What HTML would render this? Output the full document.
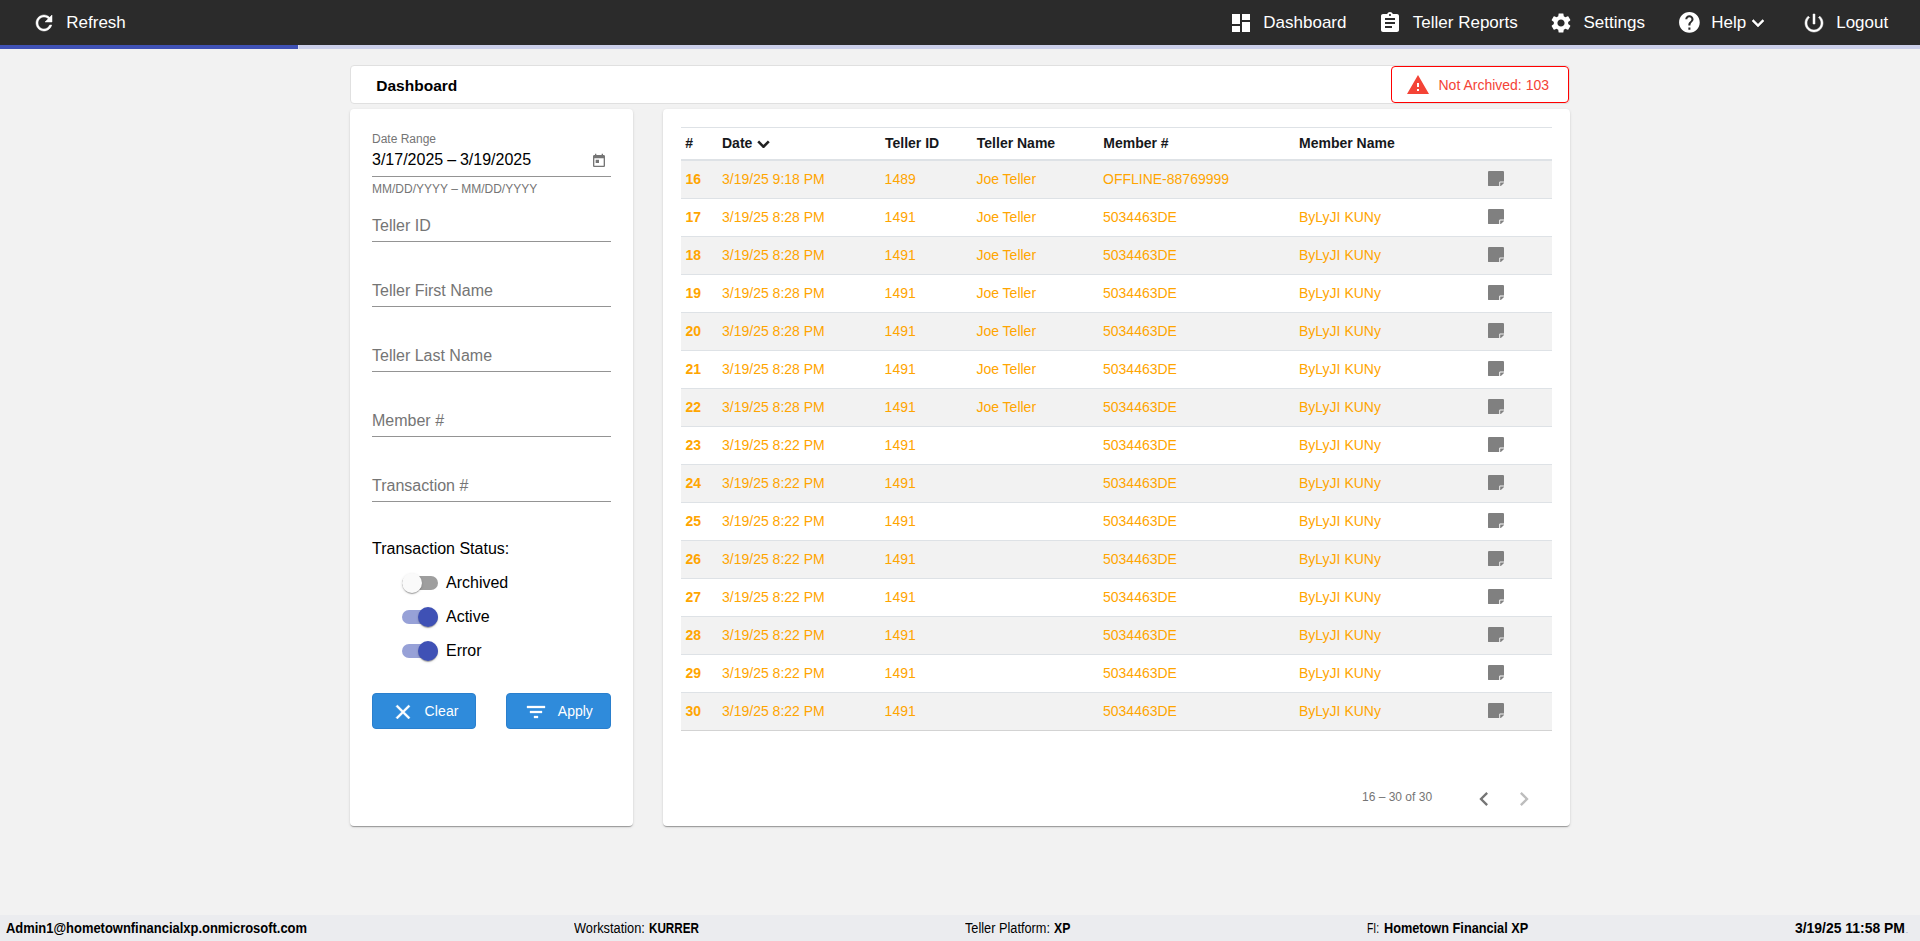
<!DOCTYPE html>
<html lang="en"><head><meta charset="utf-8"><title>Dashboard</title>
<style>
*{box-sizing:border-box;margin:0;padding:0}
html,body{width:1920px;height:941px;overflow:hidden}
body{position:relative;background:#f2f2f2;font-family:"Liberation Sans",sans-serif;color:#000;-webkit-font-smoothing:antialiased}
.ic{position:absolute;display:block}
.t{position:absolute;white-space:nowrap;line-height:1}
.nav{position:absolute;left:0;top:0;width:1920px;height:45px;background:#2b2b2b;color:#fff;font-size:17px}
.nav .t{color:#fff;font-size:17px;top:14px}
.prog{position:absolute;left:0;top:45px;width:1920px;height:4px;background:#cbcfea}
.prog i{position:absolute;left:0;top:0;height:4px;width:298px;background:#3f51b5;border-right:1px solid #dcdff2;box-sizing:content-box}
.hdr{position:absolute;left:350px;top:65px;width:1220px;height:39px;background:#fff;border:1px solid #e0e0e0;border-radius:4px}
.hdr h1{position:absolute;left:25.3px;top:11.9px;font-size:15.5px;line-height:1;font-weight:bold;color:#000;white-space:nowrap}
.na{position:absolute;left:1391px;top:66px;width:178px;height:37px;background:#fff;border:1px solid #f00;border-radius:4px}
.na .t{font-size:14px;color:#f44336;left:46.5px;top:11px}
.card{position:absolute;background:#fff;border-radius:4px;box-shadow:0 2px 1px -1px rgba(0,0,0,.2),0 1px 1px 0 rgba(0,0,0,.14),0 1px 3px 0 rgba(0,0,0,.12)}
.left{left:350px;top:109px;width:283px;height:717px}
.right{left:663px;top:109px;width:907px;height:717px}
.lbl{color:#757575}
.ul{position:absolute;left:22px;width:239px;height:1px;background:#949494}
.fld{font-size:16px;left:22px}
.tog{position:absolute;left:52px;width:36px;height:14px;border-radius:7px;background:#9e9e9e}
.tog i{position:absolute;top:-3px;left:0;width:20px;height:20px;border-radius:50%;background:#fafafa;box-shadow:0 2px 1px -1px rgba(0,0,0,.2),0 1px 1px 0 rgba(0,0,0,.14),0 1px 3px 0 rgba(0,0,0,.12)}
.tog.on{background:#97a1d7}
.tog.on i{left:16px;background:#3f51b5}
.tl{font-size:16px;left:96px;color:#000}
.btn{position:absolute;top:584px;height:36px;border-radius:4px;background:#2f8bdb;border:1px solid #2a7fcd;color:#fff;font-size:14px}
.btn .t{top:10.4px;color:#fff}
.th,.tr{position:absolute;left:18px;width:871px}
.th{top:18px;height:34px;border-top:1px solid #dee2e6;border-bottom:2px solid #dee2e6;font-weight:bold;font-size:14px;color:#16181b}
.tr{height:38px;border-bottom:1px solid #dee2e6;font-size:14px;color:#ffa500}
.tr.o{background:#f2f2f2}
.tr.last{border-bottom-color:#d3d3d3}
.th span,.tr span{position:absolute;white-space:nowrap;line-height:1}
.th span{top:8px}
.tr span{top:11px}
.tr b{position:absolute;white-space:nowrap;line-height:1;top:11px;left:4.5px}
.th .c1{left:4.2px}.th .c2{left:41px}.th .c3{left:204px}.th .c4{left:295.8px}.th .c5{left:422.3px}.th .c6{left:618px}
.tr .c2{left:41px}.tr .c3{left:203.6px}.tr .c4{left:295.4px}.tr .c5{left:422px}.tr .c6{left:618px}
.tr svg{position:absolute;left:807.2px;top:10px;width:16px;height:15.2px}
.pg{font-size:12px;color:#757575}
.foot{position:absolute;left:0;top:915px;width:1920px;height:26px;background:#ebecef;font-size:13px;color:#000}
.foot .f{top:6.15px;font-size:14px;transform-origin:0 0}
</style></head>
<body>
<div class="nav">
<svg class="ic" style="left:31.5px;top:11px;width:24px;height:24px" viewBox="0 0 24 24" fill="#fff" stroke="#fff" stroke-width="0.5" stroke-linejoin="round"><path d="M17.65 6.35C16.2 4.9 14.21 4 12 4c-4.42 0-7.99 3.58-7.99 8s3.57 8 7.99 8c3.73 0 6.84-2.55 7.73-6h-2.08c-.82 2.33-3.04 4-5.65 4-3.31 0-6-2.69-6-6s2.69-6 6-6c1.66 0 3.14.69 4.22 1.78L13 11h7V4l-2.35 2.35z"/></svg><span class="t" style="left:66.3px">Refresh</span>
<svg class="ic" style="left:1229.1px;top:10.7px;width:24px;height:24px" viewBox="0 0 24 24" fill="#fff"><path d="M3 13h8V3H3v10zm0 8h8v-6H3v6zm10 0h8V11h-8v10zm0-18v6h8V3h-8z"/></svg><span class="t" style="left:1263.3px">Dashboard</span>
<svg class="ic" style="left:1378.1px;top:10.7px;width:24px;height:24px" viewBox="0 0 24 24" fill="#fff"><path d="M19 3h-4.18C14.4 1.84 13.3 1 12 1c-1.3 0-2.4.84-2.82 2H5c-1.1 0-2 .9-2 2v14c0 1.1.9 2 2 2h14c1.1 0 2-.9 2-2V5c0-1.1-.9-2-2-2zm-7 0c.55 0 1 .45 1 1s-.45 1-1 1-1-.45-1-1 .45-1 1-1zm2 14H7v-2h7v2zm3-4H7v-2h10v2zm0-4H7V7h10v2z"/></svg><span class="t" style="left:1412.8px">Teller Reports</span>
<svg class="ic" style="left:1549.1px;top:10.7px;width:24px;height:24px" viewBox="0 0 24 24" fill="#fff"><path d="M19.14 12.94c.04-.3.06-.61.06-.94 0-.32-.02-.64-.07-.94l2.03-1.58c.18-.14.23-.41.12-.61l-1.92-3.32c-.12-.22-.37-.29-.59-.22l-2.39.96c-.5-.38-1.03-.7-1.62-.94l-.36-2.54c-.04-.24-.24-.41-.48-.41h-3.84c-.24 0-.43.17-.47.41l-.36 2.54c-.59.24-1.13.57-1.62.94l-2.39-.96c-.22-.08-.47 0-.59.22L2.74 8.87c-.12.21-.08.47.12.61l2.03 1.58c-.05.3-.09.63-.09.94s.02.64.07.94l-2.03 1.58c-.18.14-.23.41-.12.61l1.92 3.32c.12.22.37.29.59.22l2.39-.96c.5.38 1.03.7 1.62.94l.36 2.54c.05.24.24.41.48.41h3.84c.24 0 .44-.17.47-.41l.36-2.54c.59-.24 1.13-.56 1.62-.94l2.39.96c.22.08.47 0 .59-.22l1.92-3.32c.12-.22.07-.47-.12-.61l-2.01-1.58zM12 15.6c-1.98 0-3.6-1.62-3.6-3.6s1.62-3.6 3.6-3.6 3.6 1.62 3.6 3.6-1.62 3.6-3.6 3.6z"/></svg><span class="t" style="left:1583.5px">Settings</span>
<svg class="ic" style="left:1676.6px;top:10.3px;width:24.8px;height:24.8px" viewBox="0 0 24 24" fill="#fff"><path d="M12 2C6.48 2 2 6.48 2 12s4.48 10 10 10 10-4.48 10-10S17.52 2 12 2zm1 17h-2v-2h2v2zm2.07-7.75l-.9.92C13.45 12.9 13 13.5 13 15h-2v-.5c0-1.1.45-2.1 1.17-2.83l1.24-1.26c.37-.36.59-.86.59-1.41 0-1.1-.9-2-2-2s-2 .9-2 2H8c0-2.21 1.79-4 4-4s4 1.79 4 4c0 .88-.36 1.68-.93 2.25z"/></svg><span class="t" style="left:1711.2px">Help</span><svg class="ic" style="left:1746px;top:10.7px;width:24px;height:24px" viewBox="0 0 24 24" fill="#fff" stroke="#fff" stroke-width="0.5" stroke-linejoin="round"><path d="M16.59 8.59L12 13.17 7.41 8.59 6 10l6 6 6-6z"/></svg>
<svg class="ic" style="left:1802px;top:10.7px;width:24px;height:24px" viewBox="0 0 24 24" fill="#fff" stroke="#fff" stroke-width="0.5" stroke-linejoin="round"><path d="M13 3h-2v10h2V3zm4.83 2.17l-1.42 1.42C17.99 7.86 19 9.81 19 12c0 3.87-3.13 7-7 7s-7-3.13-7-7c0-2.19 1.01-4.14 2.58-5.42L6.17 5.17C4.23 6.82 3 9.26 3 12c0 4.97 4.03 9 9 9s9-4.03 9-9c0-2.74-1.23-5.18-3.17-6.83z"/></svg><span class="t" style="left:1836.2px">Logout</span>
</div>
<div class="prog"><i></i></div>
<div class="hdr"><h1>Dashboard</h1></div>
<div class="na"><svg class="ic" style="left:14px;top:6.3px;width:24px;height:24px" viewBox="0 0 24 24" fill="#f44336"><path d="M1 21h22L12 2 1 21zm12-3h-2v-2h2v2zm0-4h-2v-4h2v4z"/></svg><span class="t">Not Archived: 103</span></div>

<div class="card left">
<span class="t lbl" style="left:22px;top:23.7px;font-size:12px">Date Range</span>
<span class="t" style="left:22px;top:43px;font-size:16px;word-spacing:-.5px">3/17/2025 – 3/19/2025</span>
<svg class="ic" style="left:241px;top:44px;width:16px;height:16px" viewBox="0 0 24 24" fill="#757575"><path d="M19 3h-1V1h-2v2H8V1H6v2H5c-1.11 0-1.99.9-1.99 2L3 19c0 1.1.89 2 2 2h14c1.1 0 2-.9 2-2V5c0-1.1-.9-2-2-2zm0 16H5V8h14v11zM7 10h5v5H7z"/></svg>
<div class="ul" style="top:67px"></div>
<span class="t lbl" style="left:22px;top:73.8px;font-size:12px">MM/DD/YYYY – MM/DD/YYYY</span>
<span class="t lbl fld" style="top:109px">Teller ID</span><div class="ul" style="top:132px"></div>
<span class="t lbl fld" style="top:174px">Teller First Name</span><div class="ul" style="top:197px"></div>
<span class="t lbl fld" style="top:239px">Teller Last Name</span><div class="ul" style="top:262px"></div>
<span class="t lbl fld" style="top:304px">Member #</span><div class="ul" style="top:327px"></div>
<span class="t lbl fld" style="top:369px">Transaction #</span><div class="ul" style="top:392px"></div>
<span class="t" style="left:22px;top:432.2px;font-size:16px">Transaction Status:</span>
<div class="tog" style="top:467px"><i></i></div><span class="t tl" style="top:465.7px">Archived</span>
<div class="tog on" style="top:501px"><i></i></div><span class="t tl" style="top:499.7px">Active</span>
<div class="tog on" style="top:535px"><i></i></div><span class="t tl" style="top:533.8px">Error</span>
<div class="btn" style="left:22px;width:104px"><svg class="ic" style="left:17.9px;top:6.2px;width:24px;height:24px" viewBox="0 0 24 24" fill="#fff" stroke="#fff" stroke-width="0.4" stroke-linejoin="round"><path d="M19 6.41L17.59 5 12 10.59 6.41 5 5 6.41 10.59 12 5 17.59 6.41 19 12 13.41 17.59 19 19 17.59 13.41 12z"/></svg><span class="t" style="left:51.6px;letter-spacing:.1px">Clear</span></div>
<div class="btn" style="left:156px;width:105px"><svg class="ic" style="left:16.8px;top:6.2px;width:24px;height:24px" viewBox="0 0 24 24" fill="#fff" stroke="#fff" stroke-width="0.3" stroke-linejoin="round"><path d="M10 18h4v-2h-4v2zM3 6v2h18V6H3zm3 7h12v-2H6v2z"/></svg><span class="t" style="left:50.8px">Apply</span></div>
</div>

<div class="card right">
<div class="th"><span class="c1">#</span><span class="c2">Date</span><svg class="ic" style="left:75.8px;top:11.6px;width:13px;height:8.8px" viewBox="0 0 13 8.5" fill="none" stroke="#222" stroke-width="2.6"><path d="M1.2 1.3L6.5 6.6L11.8 1.3"/></svg><span class="c3">Teller ID</span><span class="c4">Teller Name</span><span class="c5">Member #</span><span class="c6">Member Name</span></div>
<div class="tr o" style="top:52px"><b>16</b><span class="c2">3/19/25 9:18 PM</span><span class="c3">1489</span><span class="c4">Joe Teller</span><span class="c5">OFFLINE-88769999</span><span class="c6"></span><svg viewBox="0 0 16 15.2" fill="#808080"><path d="M1 0H15a1 1 0 0 1 1 1V10.4H12.2a1 1 0 0 0-1 1V15.2H1a1 1 0 0 1-1-1V1a1 1 0 0 1 1-1zM12.2 11.4H16v.3a.7 .7 0 0 1-.2 .5L12.9 15a.7 .7 0 0 1-.5 .2h-.2z"/></svg></div>
<div class="tr" style="top:90px"><b>17</b><span class="c2">3/19/25 8:28 PM</span><span class="c3">1491</span><span class="c4">Joe Teller</span><span class="c5">5034463DE</span><span class="c6">ByLyJI KUNy</span><svg viewBox="0 0 16 15.2" fill="#808080"><path d="M1 0H15a1 1 0 0 1 1 1V10.4H12.2a1 1 0 0 0-1 1V15.2H1a1 1 0 0 1-1-1V1a1 1 0 0 1 1-1zM12.2 11.4H16v.3a.7 .7 0 0 1-.2 .5L12.9 15a.7 .7 0 0 1-.5 .2h-.2z"/></svg></div>
<div class="tr o" style="top:128px"><b>18</b><span class="c2">3/19/25 8:28 PM</span><span class="c3">1491</span><span class="c4">Joe Teller</span><span class="c5">5034463DE</span><span class="c6">ByLyJI KUNy</span><svg viewBox="0 0 16 15.2" fill="#808080"><path d="M1 0H15a1 1 0 0 1 1 1V10.4H12.2a1 1 0 0 0-1 1V15.2H1a1 1 0 0 1-1-1V1a1 1 0 0 1 1-1zM12.2 11.4H16v.3a.7 .7 0 0 1-.2 .5L12.9 15a.7 .7 0 0 1-.5 .2h-.2z"/></svg></div>
<div class="tr" style="top:166px"><b>19</b><span class="c2">3/19/25 8:28 PM</span><span class="c3">1491</span><span class="c4">Joe Teller</span><span class="c5">5034463DE</span><span class="c6">ByLyJI KUNy</span><svg viewBox="0 0 16 15.2" fill="#808080"><path d="M1 0H15a1 1 0 0 1 1 1V10.4H12.2a1 1 0 0 0-1 1V15.2H1a1 1 0 0 1-1-1V1a1 1 0 0 1 1-1zM12.2 11.4H16v.3a.7 .7 0 0 1-.2 .5L12.9 15a.7 .7 0 0 1-.5 .2h-.2z"/></svg></div>
<div class="tr o" style="top:204px"><b>20</b><span class="c2">3/19/25 8:28 PM</span><span class="c3">1491</span><span class="c4">Joe Teller</span><span class="c5">5034463DE</span><span class="c6">ByLyJI KUNy</span><svg viewBox="0 0 16 15.2" fill="#808080"><path d="M1 0H15a1 1 0 0 1 1 1V10.4H12.2a1 1 0 0 0-1 1V15.2H1a1 1 0 0 1-1-1V1a1 1 0 0 1 1-1zM12.2 11.4H16v.3a.7 .7 0 0 1-.2 .5L12.9 15a.7 .7 0 0 1-.5 .2h-.2z"/></svg></div>
<div class="tr" style="top:242px"><b>21</b><span class="c2">3/19/25 8:28 PM</span><span class="c3">1491</span><span class="c4">Joe Teller</span><span class="c5">5034463DE</span><span class="c6">ByLyJI KUNy</span><svg viewBox="0 0 16 15.2" fill="#808080"><path d="M1 0H15a1 1 0 0 1 1 1V10.4H12.2a1 1 0 0 0-1 1V15.2H1a1 1 0 0 1-1-1V1a1 1 0 0 1 1-1zM12.2 11.4H16v.3a.7 .7 0 0 1-.2 .5L12.9 15a.7 .7 0 0 1-.5 .2h-.2z"/></svg></div>
<div class="tr o" style="top:280px"><b>22</b><span class="c2">3/19/25 8:28 PM</span><span class="c3">1491</span><span class="c4">Joe Teller</span><span class="c5">5034463DE</span><span class="c6">ByLyJI KUNy</span><svg viewBox="0 0 16 15.2" fill="#808080"><path d="M1 0H15a1 1 0 0 1 1 1V10.4H12.2a1 1 0 0 0-1 1V15.2H1a1 1 0 0 1-1-1V1a1 1 0 0 1 1-1zM12.2 11.4H16v.3a.7 .7 0 0 1-.2 .5L12.9 15a.7 .7 0 0 1-.5 .2h-.2z"/></svg></div>
<div class="tr" style="top:318px"><b>23</b><span class="c2">3/19/25 8:22 PM</span><span class="c3">1491</span><span class="c4"></span><span class="c5">5034463DE</span><span class="c6">ByLyJI KUNy</span><svg viewBox="0 0 16 15.2" fill="#808080"><path d="M1 0H15a1 1 0 0 1 1 1V10.4H12.2a1 1 0 0 0-1 1V15.2H1a1 1 0 0 1-1-1V1a1 1 0 0 1 1-1zM12.2 11.4H16v.3a.7 .7 0 0 1-.2 .5L12.9 15a.7 .7 0 0 1-.5 .2h-.2z"/></svg></div>
<div class="tr o" style="top:356px"><b>24</b><span class="c2">3/19/25 8:22 PM</span><span class="c3">1491</span><span class="c4"></span><span class="c5">5034463DE</span><span class="c6">ByLyJI KUNy</span><svg viewBox="0 0 16 15.2" fill="#808080"><path d="M1 0H15a1 1 0 0 1 1 1V10.4H12.2a1 1 0 0 0-1 1V15.2H1a1 1 0 0 1-1-1V1a1 1 0 0 1 1-1zM12.2 11.4H16v.3a.7 .7 0 0 1-.2 .5L12.9 15a.7 .7 0 0 1-.5 .2h-.2z"/></svg></div>
<div class="tr" style="top:394px"><b>25</b><span class="c2">3/19/25 8:22 PM</span><span class="c3">1491</span><span class="c4"></span><span class="c5">5034463DE</span><span class="c6">ByLyJI KUNy</span><svg viewBox="0 0 16 15.2" fill="#808080"><path d="M1 0H15a1 1 0 0 1 1 1V10.4H12.2a1 1 0 0 0-1 1V15.2H1a1 1 0 0 1-1-1V1a1 1 0 0 1 1-1zM12.2 11.4H16v.3a.7 .7 0 0 1-.2 .5L12.9 15a.7 .7 0 0 1-.5 .2h-.2z"/></svg></div>
<div class="tr o" style="top:432px"><b>26</b><span class="c2">3/19/25 8:22 PM</span><span class="c3">1491</span><span class="c4"></span><span class="c5">5034463DE</span><span class="c6">ByLyJI KUNy</span><svg viewBox="0 0 16 15.2" fill="#808080"><path d="M1 0H15a1 1 0 0 1 1 1V10.4H12.2a1 1 0 0 0-1 1V15.2H1a1 1 0 0 1-1-1V1a1 1 0 0 1 1-1zM12.2 11.4H16v.3a.7 .7 0 0 1-.2 .5L12.9 15a.7 .7 0 0 1-.5 .2h-.2z"/></svg></div>
<div class="tr" style="top:470px"><b>27</b><span class="c2">3/19/25 8:22 PM</span><span class="c3">1491</span><span class="c4"></span><span class="c5">5034463DE</span><span class="c6">ByLyJI KUNy</span><svg viewBox="0 0 16 15.2" fill="#808080"><path d="M1 0H15a1 1 0 0 1 1 1V10.4H12.2a1 1 0 0 0-1 1V15.2H1a1 1 0 0 1-1-1V1a1 1 0 0 1 1-1zM12.2 11.4H16v.3a.7 .7 0 0 1-.2 .5L12.9 15a.7 .7 0 0 1-.5 .2h-.2z"/></svg></div>
<div class="tr o" style="top:508px"><b>28</b><span class="c2">3/19/25 8:22 PM</span><span class="c3">1491</span><span class="c4"></span><span class="c5">5034463DE</span><span class="c6">ByLyJI KUNy</span><svg viewBox="0 0 16 15.2" fill="#808080"><path d="M1 0H15a1 1 0 0 1 1 1V10.4H12.2a1 1 0 0 0-1 1V15.2H1a1 1 0 0 1-1-1V1a1 1 0 0 1 1-1zM12.2 11.4H16v.3a.7 .7 0 0 1-.2 .5L12.9 15a.7 .7 0 0 1-.5 .2h-.2z"/></svg></div>
<div class="tr" style="top:546px"><b>29</b><span class="c2">3/19/25 8:22 PM</span><span class="c3">1491</span><span class="c4"></span><span class="c5">5034463DE</span><span class="c6">ByLyJI KUNy</span><svg viewBox="0 0 16 15.2" fill="#808080"><path d="M1 0H15a1 1 0 0 1 1 1V10.4H12.2a1 1 0 0 0-1 1V15.2H1a1 1 0 0 1-1-1V1a1 1 0 0 1 1-1zM12.2 11.4H16v.3a.7 .7 0 0 1-.2 .5L12.9 15a.7 .7 0 0 1-.5 .2h-.2z"/></svg></div>
<div class="tr o last" style="top:584px"><b>30</b><span class="c2">3/19/25 8:22 PM</span><span class="c3">1491</span><span class="c4"></span><span class="c5">5034463DE</span><span class="c6">ByLyJI KUNy</span><svg viewBox="0 0 16 15.2" fill="#808080"><path d="M1 0H15a1 1 0 0 1 1 1V10.4H12.2a1 1 0 0 0-1 1V15.2H1a1 1 0 0 1-1-1V1a1 1 0 0 1 1-1zM12.2 11.4H16v.3a.7 .7 0 0 1-.2 .5L12.9 15a.7 .7 0 0 1-.5 .2h-.2z"/></svg></div>
<span class="t pg" style="left:699px;top:682px">16 – 30 of 30</span>
<svg class="ic" style="left:807px;top:676px;width:28px;height:28px" viewBox="0 0 24 24" fill="#757575"><path d="M15.41 7.41L14 6l-6 6 6 6 1.41-1.41L10.83 12z"/></svg>
<svg class="ic" style="left:847px;top:676px;width:28px;height:28px" viewBox="0 0 24 24" fill="#bdbdbd"><path d="M10 6L8.59 7.41 13.17 12l-4.58 4.59L10 18l6-6z"/></svg>
</div>

<div class="foot">
<b class="t f" id="f1" style="left:5.5px;transform:scaleX(.9246)">Admin1@hometownfinancialxp.onmicrosoft.com</b>
<span class="t f" id="f2" style="left:573.8px;transform:scaleX(.914)">Workstation:</span><b class="t f" id="f3" style="left:648.75px;transform:scaleX(.833)">KURRER</b>
<span class="t f" id="f4" style="left:965.4px;transform:scaleX(.91)">Teller Platform:</span><b class="t f" id="f5" style="left:1053.75px;transform:scaleX(.876)">XP</b>
<span class="t f" id="f6" style="left:1367px;transform:scaleX(.74)">FI:</span><b class="t f" id="f7" style="left:1383.7px;transform:scaleX(.909)">Hometown Financial XP</b>
<i style="position:absolute;left:1906px;top:17px;width:2px;height:1px;background:#c3cad8"></i>
<b class="t f" id="f8" style="left:1795px;transform:scaleX(.995)">3/19/25 11:58 PM</b>
</div>
</body></html>
